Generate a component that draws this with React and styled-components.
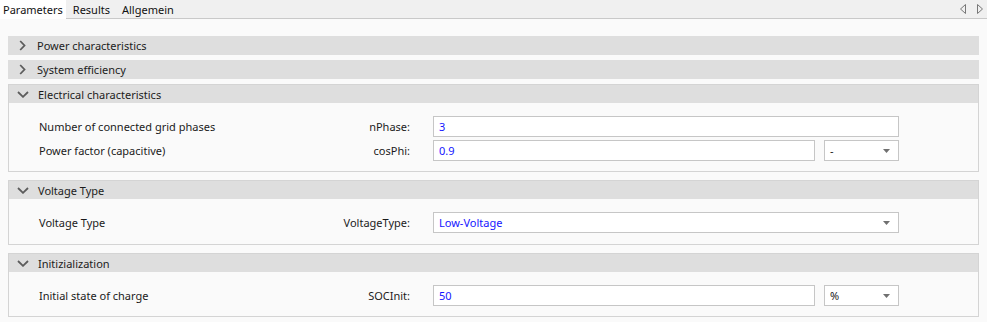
import styled, { createGlobalStyle } from 'styled-components';

const GlobalStyle = createGlobalStyle`
  html, body {
    margin: 0;
    padding: 0;
    background: #fafafa;
  }
  body {
    font-family: "Noto Sans", "Open Sans", sans-serif;
    font-size: 11px;
    color: #1a1a1a;
  }
`;

// === Tab bar ===
const TabBar = styled.div`
  display: flex;
  align-items: stretch;
  height: 18px;
  background: #f0f0f0;
  border-bottom: 1px solid #c9c9c9;
`;

const Tab = styled.div`
  display: flex;
  align-items: center;
  padding: ${(p) => (p.$active ? '0 3px' : '0 6px')};
  margin-right: ${(p) => (p.$active ? '1px' : '0')};
  background: ${(p) => (p.$active ? '#ffffff' : 'transparent')};
  height: ${(p) => (p.$active ? '19px' : '18px')};
  color: #111;
`;

const TabSpacer = styled.div`
  flex: 1;
`;

const ScrollArrows = styled.div`
  display: flex;
  align-items: center;
  gap: 11px;
  padding-right: 4px;
`;

// === Sections ===
const Content = styled.div`
  display: flex;
  flex-direction: column;
  gap: 5px;
  padding: 17px 8px 0 8px;
`;

const Section = styled.div`
  width: 971px;
  border: 1px solid ${(p) => (p.$open ? '#d4d4d4' : 'transparent')};
  box-sizing: border-box;
  margin-bottom: ${(p) => (p.$open ? '3px' : '0')};
`;

const Header = styled.div`
  display: flex;
  align-items: center;
  height: ${(p) => (p.$open ? '18px' : '19px')};
  background: #dedede;
  margin: ${(p) => (p.$open ? '0' : '-1px')};
`;

const Chevron = styled.div`
  width: 28px;
  display: flex;
  justify-content: center;
  align-items: center;
`;

const HeaderTitle = styled.span`
  color: #1c1c1c;
  padding-left: 1px;
`;

const Body = styled.div`
  background: #fafafa;
  display: flex;
  flex-direction: column;
  gap: 3px;
  padding: ${(p) => p.$pad || '13px 0 10px 30px'};
`;

const Row = styled.div`
  display: flex;
  align-items: center;
  height: 21px;
`;

const Label = styled.div`
  width: 300px;
  color: #1a1a1a;
`;

const ParamName = styled.div`
  width: 71px;
  text-align: right;
  margin-right: 23px;
  color: #1a1a1a;
`;

const Fields = styled.div`
  display: flex;
  width: 466px;
  gap: 9px;
`;

const Input = styled.div`
  flex: 1;
  height: 21px;
  box-sizing: border-box;
  border: 1px solid #c6c6c6;
  background: #ffffff;
  color: #1515ff;
  display: flex;
  align-items: center;
  padding-left: 5px;
`;

const Select = styled.div`
  width: ${(p) => (p.$small ? '75px' : 'auto')};
  flex: ${(p) => (p.$small ? 'none' : '1')};
  height: 21px;
  box-sizing: border-box;
  border: 1px solid #c6c6c6;
  background: #ffffff;
  color: ${(p) => (p.$small ? '#1a1a1a' : '#1515ff')};
  display: flex;
  align-items: center;
  justify-content: space-between;
  padding: 0 8px 0 5px;
`;

const Caret = () => (
  <svg width="7" height="4" viewBox="0 0 7 4">
    <path d="M0 0 H7 L3.5 4 Z" fill="#707070" />
  </svg>
);

const ChevronRight = () => (
  <svg width="7" height="11" viewBox="0 0 7 11">
    <path d="M1.2 1 L5.5 5.5 L1.2 10" fill="none" stroke="#5c5c5c" strokeWidth="1.8" />
  </svg>
);

const ChevronDown = () => (
  <svg width="12" height="7" viewBox="0 0 12 7">
    <path d="M1 1 L6 5.8 L11 1" fill="none" stroke="#5c5c5c" strokeWidth="1.8" />
  </svg>
);

const ArrowLeft = () => (
  <svg width="6" height="10" viewBox="0 0 6 10">
    <path d="M5.5 0.5 V9.5 L0.5 5 Z" fill="none" stroke="#777" />
  </svg>
);

const ArrowRight = () => (
  <svg width="6" height="10" viewBox="0 0 6 10">
    <path d="M0.5 0.5 V9.5 L5.5 5 Z" fill="none" stroke="#777" />
  </svg>
);

function Collapsed({ title }) {
  return (
    <Section>
      <Header>
        <Chevron>
          <ChevronRight />
        </Chevron>
        <HeaderTitle>{title}</HeaderTitle>
      </Header>
    </Section>
  );
}

function Expanded({ title, pad, children }) {
  return (
    <Section $open>
      <Header $open>
        <Chevron>
          <ChevronDown />
        </Chevron>
        <HeaderTitle>{title}</HeaderTitle>
      </Header>
      <Body $pad={pad}>{children}</Body>
    </Section>
  );
}

export default function App() {
  return (
    <>
      <GlobalStyle />
      <TabBar>
        <Tab $active>Parameters</Tab>
        <Tab>Results</Tab>
        <Tab>Allgemein</Tab>
        <TabSpacer />
        <ScrollArrows>
          <ArrowLeft />
          <ArrowRight />
        </ScrollArrows>
      </TabBar>

      <Content>
        <Collapsed title="Power characteristics" />
        <Collapsed title="System efficiency" />

        <Expanded title="Electrical characteristics">
          <Row>
            <Label>Number of connected grid phases</Label>
            <ParamName>nPhase:</ParamName>
            <Fields>
              <Input>3</Input>
            </Fields>
          </Row>
          <Row>
            <Label>Power factor (capacitive)</Label>
            <ParamName>cosPhi:</ParamName>
            <Fields>
              <Input>0.9</Input>
              <Select $small>
                <span>-</span>
                <Caret />
              </Select>
            </Fields>
          </Row>
        </Expanded>

        <Expanded title="Voltage Type" pad="13px 0 11px 30px">
          <Row>
            <Label>Voltage Type</Label>
            <ParamName>VoltageType:</ParamName>
            <Fields>
              <Select>
                <span>Low-Voltage</span>
                <Caret />
              </Select>
            </Fields>
          </Row>
        </Expanded>

        <Expanded title="Initizialization" pad="13px 0 10px 30px">
          <Row>
            <Label>Initial state of charge</Label>
            <ParamName>SOCInit:</ParamName>
            <Fields>
              <Input>50</Input>
              <Select $small>
                <span>%</span>
                <Caret />
              </Select>
            </Fields>
          </Row>
        </Expanded>
      </Content>
    </>
  );
}
